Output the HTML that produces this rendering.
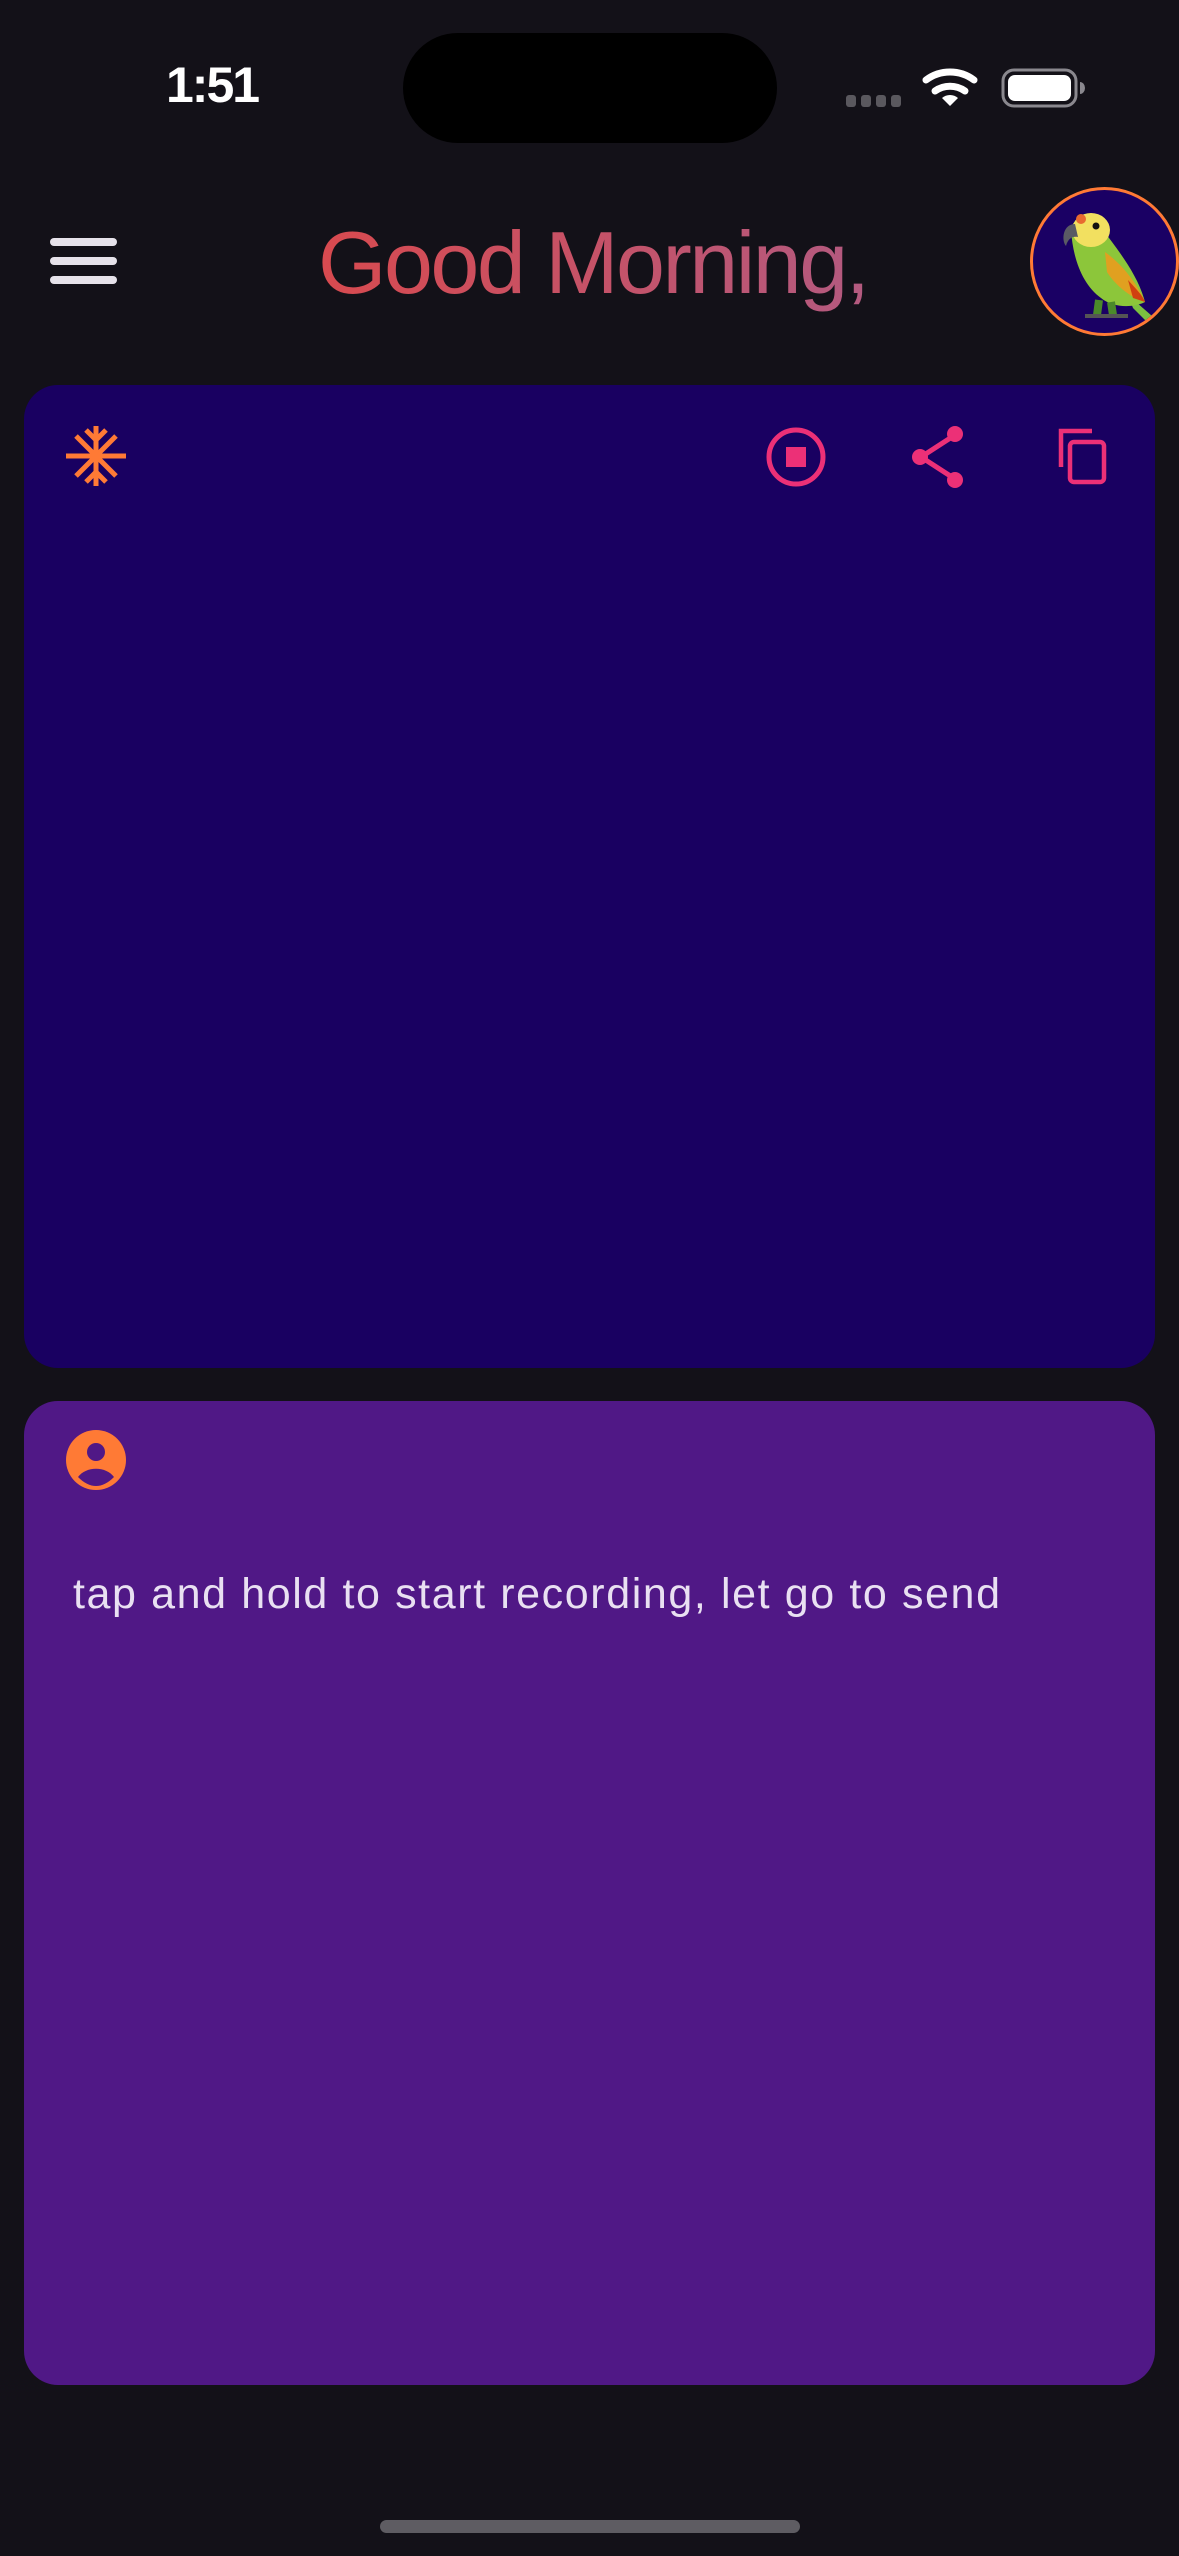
<!DOCTYPE html>
<html><head><meta charset="utf-8">
<style>
html,body{margin:0;padding:0;}
body{width:1179px;height:2556px;background:#131118;position:relative;overflow:hidden;font-family:"Liberation Sans",sans-serif;}
.abs{position:absolute;}
.time{left:166px;top:56px;font-size:50px;font-weight:bold;color:#fff;letter-spacing:-2px;}
.island{left:403px;top:33px;width:374px;height:110px;border-radius:55px;background:#000;}
.ham{left:50px;width:67px;height:8px;border-radius:4px;background:#e6e2ea;}
.title{left:318px;top:208px;font-size:88px;line-height:110px;letter-spacing:-2.5px;background:linear-gradient(90deg,#d84a4f,#b35a80);-webkit-background-clip:text;background-clip:text;color:transparent;white-space:nowrap;}
.avatar{left:1030px;top:187px;width:143px;height:143px;border-radius:50%;border:3px solid #ff7a35;background:#1a0064;overflow:hidden;}
.card1{left:24px;top:385px;width:1131px;height:983px;border-radius:34px;background:#190061;}
.card2{left:24px;top:1401px;width:1131px;height:984px;border-radius:34px;background:#501886;}
.txt{left:73px;top:1570px;font-size:43px;color:#e9e0f2;letter-spacing:1.6px;white-space:nowrap;}
.home{left:380px;top:2520px;width:420px;height:13px;border-radius:7px;background:#5e5c62;}
</style></head><body>
<div class="abs time">1:51</div>
<div class="abs island"></div>
<svg class="abs" style="left:840px;top:60px" width="250" height="60" viewBox="0 0 250 60">
  <rect x="6" y="35" width="10" height="12" rx="3" fill="#5a585e"/>
  <rect x="21" y="35" width="10" height="12" rx="3" fill="#5a585e"/>
  <rect x="36" y="35" width="10" height="12" rx="3" fill="#5a585e"/>
  <rect x="51" y="35" width="10" height="12" rx="3" fill="#5a585e"/>
  <path d="M86 20 A40 40 0 0 1 134 20" stroke="#fff" stroke-width="7" fill="none" stroke-linecap="round"/>
  <path d="M95 31 A26 26 0 0 1 125 31" stroke="#fff" stroke-width="7" fill="none" stroke-linecap="round"/>
  <path d="M110 46 L102 38 A12 12 0 0 1 118 38 Z" fill="#fff"/>
  <rect x="163" y="10" width="73" height="36" rx="11" fill="none" stroke="#8a888e" stroke-width="3"/>
  <rect x="168" y="15" width="63" height="26" rx="7" fill="#fff"/>
  <path d="M240 22 a5 6 0 0 1 0 12 z" fill="#8a888e"/>
</svg>
<div class="abs ham" style="top:238px"></div>
<div class="abs ham" style="top:257px"></div>
<div class="abs ham" style="top:276px"></div>
<div class="abs title">Good Morning,</div>
<div class="abs avatar">
<svg width="143" height="143" viewBox="0 0 143 143">
  <path d="M95 105 L135 140 L125 143 L100 118 Z" fill="#7cc040"/>
  <path d="M38 40 C40 25 60 22 70 40 C85 60 105 85 112 112 C100 118 80 118 68 108 C50 95 40 70 38 40 Z" fill="#8cc63a"/>
  <path d="M72 62 C90 75 105 95 112 112 C98 108 82 95 74 82 Z" fill="#e0a020"/>
  <path d="M95 90 C104 100 110 106 112 112 L100 108 Z" fill="#d04010"/>
  <ellipse cx="58" cy="40" rx="19" ry="17" fill="#f2e060"/>
  <circle cx="48" cy="29" r="5" fill="#e86a30"/>
  <circle cx="63" cy="36" r="3.5" fill="#111"/>
  <path d="M42 34 C30 34 28 50 33 56 C35 48 40 46 45 47 Z" fill="#5a5a64"/>
  <path d="M66 110 L64 125 M78 112 L80 125" stroke="#4b8a2a" stroke-width="8"/>
  <path d="M52 126 L95 126" stroke="#555" stroke-width="4"/>
</svg>
</div>
<div class="abs card1"></div>
<svg class="abs" style="left:64px;top:424px" width="64" height="64" viewBox="0 0 64 64" stroke="#ff7a35" stroke-width="5" fill="none">
  <path d="M32 2 V62 M2 32 H62 M12 12 L52 52 M52 12 L12 52"/>
  <path d="M22 6 L32 16 L42 6 M22 58 L32 48 L42 58"/>
</svg>
<svg class="abs" style="left:764px;top:425px" width="64" height="64" viewBox="0 0 64 64">
  <circle cx="32" cy="32" r="27" stroke="#ec3077" stroke-width="5" fill="none"/>
  <rect x="22" y="22" width="20" height="20" fill="#ec3077"/>
</svg>
<svg class="abs" style="left:907px;top:425px" width="64" height="64" viewBox="0 0 64 64">
  <path d="M48 10 L14 32 L48 54" stroke="#ec3077" stroke-width="5" fill="none"/>
  <circle cx="48" cy="9" r="8" fill="#ec3077"/>
  <circle cx="13" cy="32" r="8" fill="#ec3077"/>
  <circle cx="48" cy="55" r="8" fill="#ec3077"/>
</svg>
<svg class="abs" style="left:1040px;top:410px" width="90" height="90" viewBox="0 0 90 90" fill="none" stroke="#ec3077" stroke-width="4.5">
  <path d="M52 21 H21 V57"/>
  <rect x="30" y="32" width="34" height="40" rx="4"/>
</svg>
<div class="abs card2"></div>
<svg class="abs" style="left:66px;top:1430px" width="60" height="60" viewBox="0 0 60 60">
  <circle cx="30" cy="30" r="30" fill="#ff7a35"/>
  <circle cx="30" cy="22" r="9" fill="#501886"/>
  <path d="M12 47 C20 36 40 36 48 47 C42 53 36 56 30 56 C24 56 18 53 12 47 Z" fill="#501886"/>
</svg>
<div class="abs txt">tap and hold to start recording, let go to send</div>
<div class="abs home"></div>
</body></html>
